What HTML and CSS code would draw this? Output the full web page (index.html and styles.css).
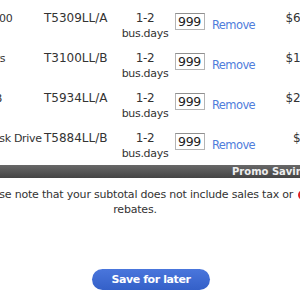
FILE: index.html
```html
<!DOCTYPE html>
<html>
<head>
  <title>Shopping Cart</title>
  <link rel="stylesheet" href="styles.css">
</head>
<body>
  <div class="page">
    <div class="cart">
      <div class="item">
        <div class="name">Disk 1000</div>
        <div class="part">T5309LL/A</div>
        <div class="ship">1-2<br>bus.days</div>
        <div class="qty">
          <input type="text" value="999">
          <a href="#" class="remove">Remove</a>
        </div>
        <div class="price">$699.00</div>
      </div>
      <div class="item">
        <div class="name">Monitors</div>
        <div class="part">T3100LL/B</div>
        <div class="ship">1-2<br>bus.days</div>
        <div class="qty">
          <input type="text" value="999">
          <a href="#" class="remove">Remove</a>
        </div>
        <div class="price">$129.00</div>
      </div>
      <div class="item">
        <div class="name">Zip 1GB</div>
        <div class="part">T5934LL/A</div>
        <div class="ship">1-2<br>bus.days</div>
        <div class="qty">
          <input type="text" value="999">
          <a href="#" class="remove">Remove</a>
        </div>
        <div class="price">$249.00</div>
      </div>
      <div class="item">
        <div class="name">Hard Disk Drive</div>
        <div class="part">T5884LL/B</div>
        <div class="ship">1-2<br>bus.days</div>
        <div class="qty">
          <input type="text" value="999">
          <a href="#" class="remove">Remove</a>
        </div>
        <div class="price">$49.00</div>
      </div>
    </div>

    <div class="promo-bar">Promo Savings</div>

    <div class="note-row">
      <p class="note">Please note that your subtotal does not include sales tax or rebates.</p>
      <span class="alert"></span>
    </div>

    <div class="actions">
      <button type="button" class="save">Save for later</button>
    </div>
  </div>
</body>
</html>
```

FILE: styles.css
```css
body {
  margin: 0;
  padding: 0;
  overflow: hidden;
  background-color: #FFFFFF;
  font-family: "DejaVu Sans", Verdana, sans-serif;
  color: #333333;
}

/* the cart is wider than the window, we only see the middle of it */
.page {
  width: 420px;
  margin-left: -60px;
}

.cart {
  margin-top: 5px;
}

.item {
  display: flex;
  height: 40px;
  padding-top: 6px;
  box-sizing: border-box;
  font-size: 11px;
  line-height: 15px;
  letter-spacing: -0.3px;
}

.name {
  width: 104px;
  padding-left: 20px;
  box-sizing: border-box;
  white-space: nowrap;
}

.part {
  width: 76px;
  font-size: 12px;
  letter-spacing: 0;
}

.ship {
  width: 50px;
  text-align: center;
}

.ship:first-line {
  font-size: 12px;
}

.qty {
  width: 114px;
  display: flex;
  align-items: flex-start;
  padding-left: 5px;
  box-sizing: border-box;
}

.qty input {
  width: 30px;
  height: 17px;
  box-sizing: border-box;
  margin: 2px 0 0 0;
  padding: 0 2px;
  border: 1px solid #B4B4B4;
  border-top-color: #909090;
  font-family: "DejaVu Sans", sans-serif;
  font-size: 12.5px;
  letter-spacing: -0.3px;
  color: #222222;
}

.remove {
  margin: 7px 0 0 7px;
  color: #4F7DDB;
  text-decoration: none;
  font-size: 11.5px;
  letter-spacing: -0.6px;
  line-height: 15px;
}

.price {
  width: 51px;
  text-align: right;
  font-size: 12px;
  letter-spacing: 0;
}

.promo-bar {
  height: 13px;
  padding-left: 292px;
  background: linear-gradient(#686868, #444444);
  color: #EEEEEE;
  font-size: 10px;
  font-weight: bold;
  line-height: 13px;
  white-space: nowrap;
  overflow: hidden;
}

.note-row {
  display: flex;
  align-items: flex-start;
  margin-top: 9px;
}

.note {
  width: 320px;
  margin: 0 0 0 35px;
  text-align: center;
  font-size: 11px;
  line-height: 15px;
  letter-spacing: -0.2px;
}

.alert {
  flex: none;
  width: 10px;
  height: 10px;
  margin: 3px 0 0 3px;
  border-radius: 50%;
  background-color: #E02020;
}

.actions {
  margin-top: 51px;
  padding-left: 152px;
}

.save {
  width: 118px;
  height: 21px;
  padding: 0;
  border: none;
  border-radius: 11px;
  background: linear-gradient(#4A76DC, #3460C8);
  color: #FFFFFF;
  font-family: "DejaVu Sans", sans-serif;
  font-size: 11px;
  font-weight: bold;
  letter-spacing: -0.4px;
  cursor: pointer;
}
```
